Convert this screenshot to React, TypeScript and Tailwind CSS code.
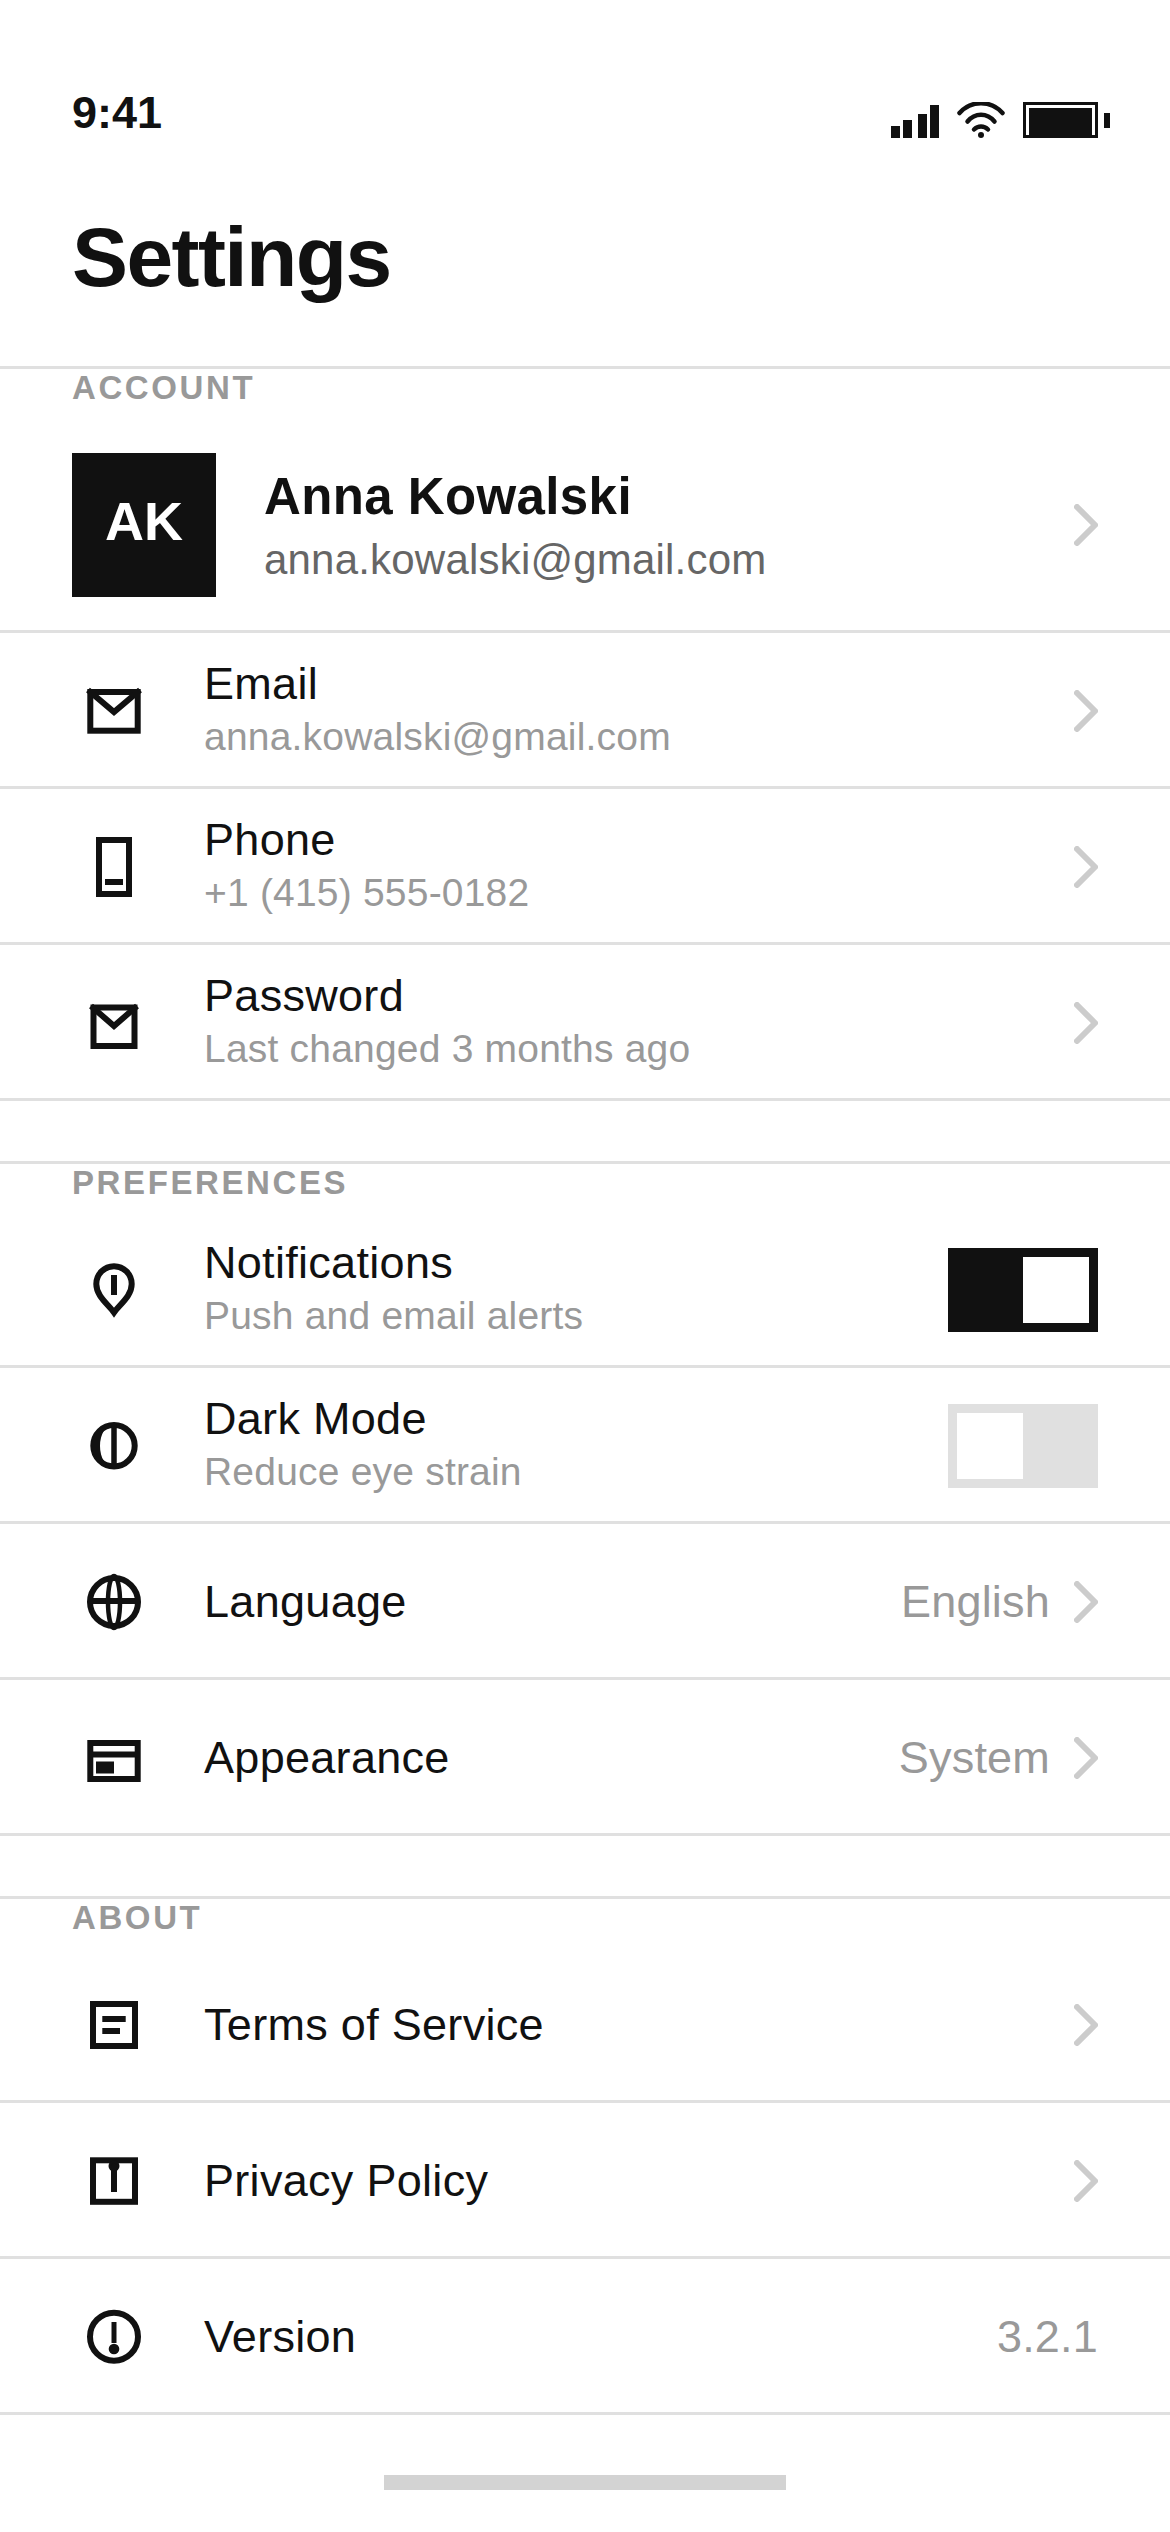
import type { ReactNode } from 'react';

const ink = '#111111';

const Chevron = () => (
	<svg width="24" height="42" viewBox="0 0 24 42" fill="none" className="shrink-0">
		<path d="M3 3 L21 21 L3 39" stroke="#cccccc" strokeWidth="6" strokeLinecap="round" strokeLinejoin="round" />
	</svg>
);

const Icon = ({ children }: { children: ReactNode }) => (
	<svg width="60" height="60" viewBox="0 0 60 60" fill="none" stroke={ink} strokeWidth="6">
		{children}
	</svg>
);

const icons: Record<string, ReactNode> = {
	mail: (
		<Icon>
			<rect x="6.3" y="11" width="47.4" height="38.7" />
			<path d="M4 9 L30 31 L56 9" />
		</Icon>
	),
	phone: (
		<Icon>
			<rect x="15" y="3" width="30" height="54" />
			<path d="M21 45 H39" />
		</Icon>
	),
	lock: (
		<Icon>
			<rect x="9.5" y="14.5" width="41" height="38.5" />
			<path d="M7 13 L30 33 L53 13" />
		</Icon>
	),
	bell: (
		<Icon>
			<path d="M30 52.5 C24 44 12.3 36 12.3 24 A17.7 17.7 0 0 1 47.7 24 C47.7 36 36 44 30 52.5 Z" />
			<path d="M30 15 V35" />
		</Icon>
	),
	moon: (
		<Icon>
			<circle cx="30" cy="29.7" r="20.7" />
			<path d="M30 8 A22 22 0 0 0 30 52 A14 22 0 0 1 30 8 Z" fill={ink} stroke="none" />
			<path d="M30 8 V52" strokeWidth="5.5" />
		</Icon>
	),
	globe: (
		<Icon>
			<circle cx="30" cy="30" r="24" />
			<path d="M6 29 H54" />
			<ellipse cx="30" cy="30" rx="6" ry="26" strokeWidth="4.5" />
		</Icon>
	),
	card: (
		<Icon>
			<rect x="6.3" y="15" width="47.4" height="36" />
			<path d="M6 26.5 H54" />
			<rect x="15" y="36.5" width="12" height="6" />
		</Icon>
	),
	doc: (
		<Icon>
			<rect x="9" y="9" width="42" height="42" />
			<path d="M18.3 24 H41.7 M18.3 36 H36" />
		</Icon>
	),
	shield: (
		<Icon>
			<rect x="9" y="9.3" width="42" height="41.5" />
			<circle cx="30" cy="15" r="4" fill={ink} strokeWidth="3" />
			<path d="M30 15 V41" />
		</Icon>
	),
	info: (
		<Icon>
			<circle cx="30" cy="29.7" r="24" />
			<path d="M30 15 V36" strokeWidth="5" />
			<circle cx="30" cy="42" r="5.3" fill={ink} stroke="none" />
		</Icon>
	),
};

const Toggle = ({ on }: { on: boolean }) => (
	<div
		className={`w-[150px] h-[84px] p-[9px] flex ${
			on ? 'bg-[#111111] justify-end' : 'bg-[#e0e0e0] justify-start'
		}`}
	>
		<div className="w-[66px] h-[66px] bg-white" />
	</div>
);

type RowProps = {
	icon: string;
	title: string;
	sub?: string;
	value?: string;
	chevron?: boolean;
	toggle?: boolean;
};

const Row = ({ icon, title, sub, value, chevron, toggle }: RowProps) => (
	<div className="h-[156px] flex items-center pt-[3px] pl-[84px] pr-[72px] border-b-[3px] border-[#e0e0e0]">
		<div className="w-[60px] h-[60px] mr-[60px] shrink-0">{icons[icon]}</div>
		<div className={`flex-1 flex flex-col gap-[2px] ${sub ? 'pb-[5px]' : ''}`}>
			<span className="text-[45px] leading-[54px] tracking-[0.3px] text-[#111111]">{title}</span>
			{sub && <span className="text-[39px] leading-[48px] tracking-[0.2px] text-[#999999]">{sub}</span>}
		</div>
		{value && (
			<span className={`text-[45px] leading-[54px] tracking-[0.2px] text-[#999999] ${chevron ? 'mr-[24px]' : ''}`}>
				{value}
			</span>
		)}
		{toggle !== undefined && <Toggle on={toggle} />}
		{chevron && <Chevron />}
	</div>
);

const SectionLabel = ({ children }: { children: string }) => (
	<div className="h-[51px] border-t-[3px] border-[#e0e0e0] pl-[72px] pt-[1px]">
		<div className="text-[33px] leading-[36px] font-bold tracking-[2.6px] text-[#999999]">{children}</div>
	</div>
);

export default function App() {
	return (
		<div className="w-[1170px] h-[2532px] bg-white flex flex-col font-['Liberation_Sans',Arial,sans-serif]">
			<div className="h-[201px] shrink-0 pt-[87px] pl-[72px] pr-[60px] flex justify-between items-start">
				<span className="text-[45px] leading-[52px] font-bold text-[#111111]">9:41</span>
				<div className="flex items-start gap-[18px] mt-[15px]">
					<svg width="48" height="36" viewBox="0 0 48 36" fill={ink}>
						<rect x="0" y="24" width="9" height="12" />
						<rect x="12" y="18" width="9" height="18" />
						<rect x="27" y="12" width="9" height="24" />
						<rect x="39" y="3" width="9" height="33" />
					</svg>
					<svg width="48" height="36" viewBox="0 0 48 36" fill="none" stroke={ink} strokeWidth="4.5" strokeLinecap="round">
						<path d="M2.5 11 C14 -2 34 -2 45.5 11" />
						<path d="M10.5 19.5 C18 10.5 30 10.5 37.5 19.5" />
						<path d="M17 27.5 C21 23.5 27 23.5 31 27.5" />
						<circle cx="24" cy="33" r="3" fill={ink} stroke="none" />
					</svg>
					<div className="flex items-center gap-[6px]">
						<div className="w-[75px] h-[36px] border-[3px] border-[#111111] pt-[3px] px-[3px] bg-white">
							<div className="w-full h-full bg-[#111111]" />
						</div>
						<div className="w-[6px] h-[15px] bg-[#111111]" />
					</div>
				</div>
			</div>
			<div className="h-[165px] shrink-0 pt-[8px] pl-[72px]">
				<h1 className="text-[84px] leading-[96px] font-bold tracking-[-1.6px] text-[#111111]">Settings</h1>
			</div>

			<SectionLabel>ACCOUNT</SectionLabel>
			<div className="h-[216px] shrink-0 flex items-center pt-[3px] pl-[72px] pr-[72px] border-b-[3px] border-[#e0e0e0]">
				<div className="w-[144px] h-[144px] bg-[#111111] flex items-center justify-center pb-[8px] mr-[48px]">
					<span className="text-[54px] font-bold text-white">AK</span>
				</div>
				<div className="flex-1 flex flex-col gap-[6px] pt-[3px]">
					<span className="text-[51px] leading-[60px] font-bold tracking-[0.4px] text-[#111111]">Anna Kowalski</span>
					<span className="text-[42px] leading-[54px] tracking-[0.2px] text-[#666666]">anna.kowalski@gmail.com</span>
				</div>
				<Chevron />
			</div>
			<Row icon="mail" title="Email" sub="anna.kowalski@gmail.com" chevron />
			<Row icon="phone" title="Phone" sub="+1 (415) 555-0182" chevron />
			<Row icon="lock" title="Password" sub="Last changed 3 months ago" chevron />

			<div className="h-[60px] shrink-0" />
			<SectionLabel>PREFERENCES</SectionLabel>
			<Row icon="bell" title="Notifications" sub="Push and email alerts" toggle />
			<Row icon="moon" title="Dark Mode" sub="Reduce eye strain" toggle={false} />
			<Row icon="globe" title="Language" value="English" chevron />
			<Row icon="card" title="Appearance" value="System" chevron />

			<div className="h-[60px] shrink-0" />
			<SectionLabel>ABOUT</SectionLabel>
			<Row icon="doc" title="Terms of Service" chevron />
			<Row icon="shield" title="Privacy Policy" chevron />
			<Row icon="info" title="Version" value="3.2.1" />

			<div className="flex-1 flex justify-center pt-[60px]">
				<div className="w-[402px] h-[15px] bg-[#d3d3d3]" />
			</div>
		</div>
	);
}
